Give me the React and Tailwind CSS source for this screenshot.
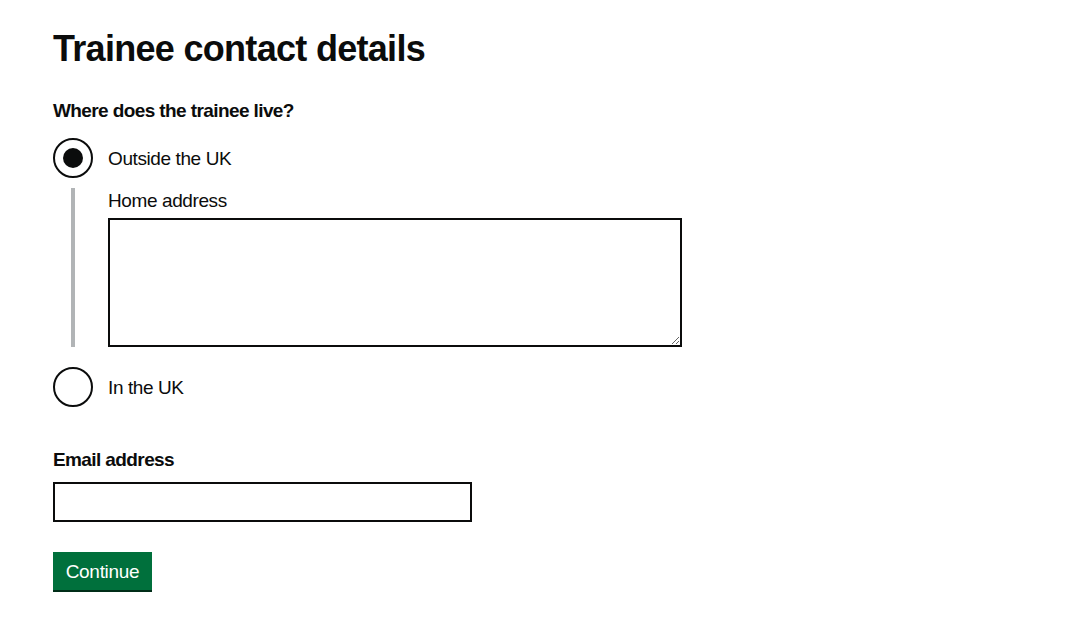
import { useState } from 'react';

function Radio({ checked, label, onChange }) {
  return (
    <label className="flex items-center cursor-pointer">
      <span className="flex h-10 w-10 shrink-0 items-center justify-center rounded-full border-2 border-[#0b0c0c] bg-white">
        {checked && <span className="h-5 w-5 rounded-full bg-[#0b0c0c]" />}
      </span>
      <input type="radio" className="sr-only" checked={checked} onChange={onChange} />
      <span className="pl-[15px] text-[19px] leading-[25px] tracking-[-0.4px]">{label}</span>
    </label>
  );
}

export default function App() {
  const [where, setWhere] = useState('outside');

  return (
    <div className="min-h-screen bg-white px-[53px] pt-[29px] text-[#0b0c0c] font-['Liberation_Sans',Arial,sans-serif]">
      <h1 className="text-[36px] font-bold leading-[40px] tracking-[-0.7px]">Trainee contact details</h1>

      <fieldset className="mt-[29px]">
        <legend className="text-[19px] font-bold leading-[25px] tracking-[-0.6px]">Where does the trainee live?</legend>

        <div className="mt-[15px]">
          <Radio checked={where === 'outside'} label="Outside the UK" onChange={() => setWhere('outside')} />
        </div>

        {where === 'outside' && (
          <div className="ml-[18px] mt-[10px] border-l-4 border-[#b1b4b6] pl-[33px]">
            <label className="block text-[19px] leading-[25px] tracking-[-0.4px]">Home address</label>
            <textarea rows={5} className="mt-[5px] block h-[129px] w-[574px] border-2 border-[#0b0c0c] p-[5px] text-[19px] outline-none" />
          </div>
        )}

        <div className="mt-[20px]">
          <Radio checked={where === 'uk'} label="In the UK" onChange={() => setWhere('uk')} />
        </div>
      </fieldset>

      <div className="mt-[40px]">
        <label className="block text-[19px] font-bold leading-[25px] tracking-[-0.6px]">Email address</label>
        <input type="email" className="mt-[10px] block h-10 w-[419px] border-2 border-[#0b0c0c] px-[5px] text-[19px] outline-none" />
      </div>

      <button className="mt-[30px] h-[38px] w-[99px] bg-[#00703c] text-[19px] leading-[25px] tracking-[-0.3px] text-white shadow-[0_2px_0_#002d18]">
        Continue
      </button>
    </div>
  );
}
